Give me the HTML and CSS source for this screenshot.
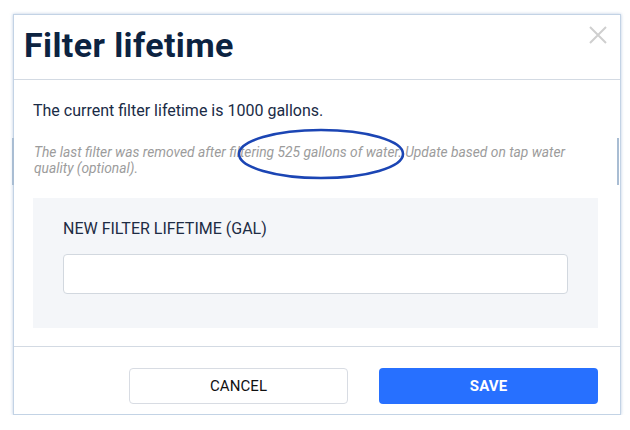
FILE: index.html
```html
<!DOCTYPE html>
<html>
<head>
<meta charset="utf-8">
<link rel="stylesheet" href="styles.css">
</head>
<body>
<div class="dialog">
  <div class="header">
    <h1 class="title">Filter lifetime</h1>
    <button class="close" aria-label="Close">
      <svg width="18" height="18" viewBox="0 0 18 18"><path d="M1 1L17 17M17 1L1 17" stroke="#cfcfcf" stroke-width="2" fill="none"/></svg>
    </button>
  </div>
  <div class="body">
    <p class="current">The current filter lifetime is 1000 gallons.</p>
    <div class="note-band">
      <p class="note">The last filter was removed after filtering 525 gallons of water. Update based on tap water quality (optional).</p>
      <svg class="circle" width="170" height="54" viewBox="0 0 170 54"><ellipse cx="85" cy="27" rx="82" ry="24" fill="none" stroke="#1b45b4" stroke-width="2.6"/></svg>
    </div>
    <div class="field-box">
      <label class="label" for="life">NEW FILTER LIFETIME (GAL)</label>
      <input id="life" class="input" type="text">
    </div>
  </div>
  <div class="footer">
    <button class="btn cancel">CANCEL</button>
    <button class="btn save">SAVE</button>
  </div>
</div>
</body>
</html>
```
FILE: styles.css
```css
* { box-sizing: border-box; }
html, body { margin: 0; padding: 0; background: #fff; }
body {
  font-family: Roboto, "Liberation Sans", sans-serif;
  padding: 14px 0 0 13px;
}
.dialog {
  width: 608px;
  height: 401px;
  border: 1px solid #c3d3e5;
  box-shadow: 0 0 3px rgba(130, 160, 200, 0.55);
  background: #fff;
  display: flex;
  flex-direction: column;
}
.header {
  height: 65px;
  border-bottom: 1px solid #d3dae3;
  display: flex;
  justify-content: space-between;
  align-items: flex-start;
  padding: 0 13px 0 10px;
}
.title {
  margin: 10px 0 0;
  font-size: 34px;
  line-height: 40px;
  font-weight: 700;
  color: #0c2341;
  letter-spacing: 0.4px;
}
.close {
  margin-top: 11px;
  border: 0;
  background: none;
  padding: 0;
  width: 18px;
  height: 18px;
}
.close svg { display: block; }
.body {
  padding: 0 22px 0 19px;
  flex: 1;
  border-bottom: 1px solid #d3dae3;
}
.current {
  margin: 21px 0 0;
  font-size: 16px;
  line-height: 20px;
  color: #1a2b46;
}
.note-band {
  position: relative;
  margin: 17px -21px 0 -21px;
  padding: 0 21px 0 20px;
  border-left: 2px solid #a9bdd3;
  border-right: 2px solid #a9bdd3;
}
.note {
  margin: 0;
  padding: 6px 20px 9px 0;
  font-size: 13.8px;
  line-height: 16px;
  font-style: italic;
  color: #9c9c9c;
}
.circle {
  position: absolute;
  left: 222px;
  top: -11px;
}
.field-box {
  margin-top: 13px;
  height: 130px;
  width: 565px;
  background: #f4f6f9;
  padding: 22px 30px 0;
}
.label {
  display: block;
  font-size: 16px;
  line-height: 18px;
  color: #1d2c44;
}
.input {
  display: block;
  margin-top: 16px;
  width: 505px;
  height: 40px;
  border: 1px solid #d2d8df;
  border-radius: 4px;
  background: #fff;
}
.footer {
  height: 67px;
  display: flex;
  justify-content: flex-end;
  gap: 31px;
  padding: 21px 22px 0 0;
}
.btn {
  width: 219px;
  height: 36px;
  border-radius: 4px;
  font-family: Roboto, "Liberation Sans", sans-serif;
  font-size: 15px;
  letter-spacing: 0.1px;
}
.cancel {
  background: #fff;
  border: 1px solid #d8dce3;
  color: #111;
  font-weight: 400;
}
.save {
  background: #2770ff;
  border: 0;
  color: #fff;
  font-weight: 700;
}
```
